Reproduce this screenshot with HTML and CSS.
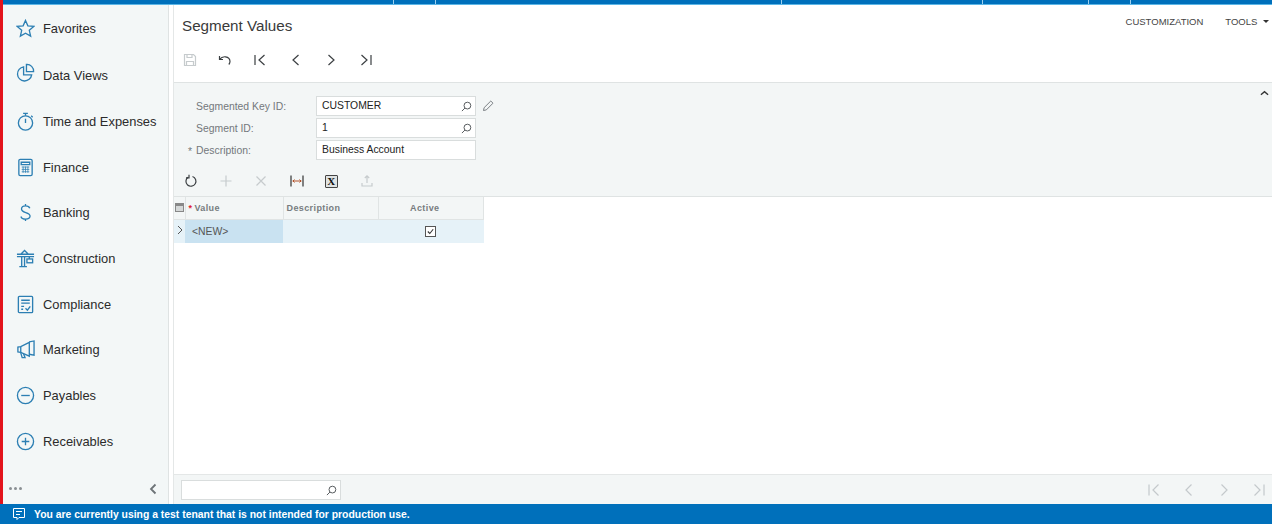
FILE: index.html
```html
<!DOCTYPE html>
<html lang="en">
<head>
    <meta charset="UTF-8">
    <title>Segment Values</title>
    <link rel="stylesheet" href="styles.css">
</head>
<body>
    <div class="app">
        <div class="topbar">
            <span class="tab tab-1"></span>
            <span class="tab tab-2"></span>
            <span class="tab tab-3"></span>
            <span class="tab tab-4"></span>
            <span class="tab tab-5"></span>
            <span class="tab tab-6"></span>
        </div>
        <div class="workspace">
            <aside class="sidebar">
                <nav class="nav">
                    <a class="nav-item nav-first">
                        <svg class="nav-icon" viewBox="0 0 20 20"><path d="M10 1.500l2.500 5.700 6.200.6-4.700 4.100 1.400 6.100L10 14.900 4.600 18l1.400-6.100L1.300 7.800l6.200-.6z"/></svg>
                        Favorites
                    </a>
                    <a class="nav-item">
                        <svg class="nav-icon icon-high" viewBox="0 0 20 20"><path d="M8 4a7.500 7.500 0 1 0 8.500 8.500H8z"/><path d="M11 1.500a7 7 0 0 1 7.500 7.500H11z"/></svg>
                        Data Views
                    </a>
                    <a class="nav-item">
                        <svg class="nav-icon" viewBox="0 0 20 20"><circle cx="10" cy="11.500" r="7.500"/><path d="M7.500 1.500h5M10 1.500v2.500M10 11.500V7M16 4l1.500 1.500"/></svg>
                        Time and Expenses
                    </a>
                    <a class="nav-item">
                        <svg class="nav-icon" viewBox="0 0 20 20"><rect x="3" y="1.500" width="14" height="17" rx="1.500"/><path d="M5.500 4.500h9v2.500h-9z"/><path class="thin" d="M6 9.500h8M6 12h8M6 14.500h8M7.500 9v6.500M10 9v6.500M12.500 9v6.500"/></svg>
                        Finance
                    </a>
                    <a class="nav-item">
                        <svg class="nav-icon" viewBox="0 0 20 20"><path d="M14.500 5.500C14 3.800 12.200 3 10 3 7.500 3 5.800 4.300 5.800 6.300c0 4.700 9 2.800 9 7.500 0 2-1.900 3.200-4.800 3.200-2.500 0-4.300-1-4.800-2.800M10 1v2M10 17v2"/></svg>
                        Banking
                    </a>
                    <a class="nav-item">
                        <svg class="nav-icon" viewBox="0 0 20 20"><path d="M1 5.500h18M1 8h18M5 5.500L9 1.500l4 4M6 8v10.500M9 8v10.500M3.500 18.500h8M14 8v2.500"/><rect x="11.500" y="10.500" width="6" height="4"/></svg>
                        Construction
                    </a>
                    <a class="nav-item">
                        <svg class="nav-icon" viewBox="0 0 20 20"><rect x="2.500" y="1.500" width="15" height="17" rx="1"/><path d="M5.500 5.500h9M5.500 8.500h9M5.500 12h3M5.500 15h2M10 14l2 2 3-4"/></svg>
                        Compliance
                    </a>
                    <a class="nav-item">
                        <svg class="nav-icon" viewBox="0 0 20 20"><path d="M2 7.500v5l3 .5 9 4V2.500L5 7z"/><path d="M5 7v6M5 13.500l1.500 5h3L8 14.800M14 2l5-1v15l-5-1"/></svg>
                        Marketing
                    </a>
                    <a class="nav-item">
                        <svg class="nav-icon" viewBox="0 0 20 20"><circle cx="10" cy="10" r="8.500"/><path d="M5.500 10h9"/></svg>
                        Payables
                    </a>
                    <a class="nav-item">
                        <svg class="nav-icon" viewBox="0 0 20 20"><circle cx="10" cy="10" r="8.500"/><path d="M6 10h8M10 6v8"/></svg>
                        Receivables
                    </a>
                </nav>
                <div class="sidebar-foot">
                    <span class="dots">
                        <i></i><i></i><i></i>
                    </span>
                    <svg class="collapse" viewBox="0 0 10 12"><path d="M7.500 1.500L3 6l4.500 4.500"/></svg>
                </div>
            </aside>

            <main class="main">
                <header class="page-head">
                    <h1>Segment Values</h1>
                    <div class="head-links">
                        <a>CUSTOMIZATION</a>
                        <a>TOOLS <span class="caret"></span></a>
                    </div>
                </header>

                <div class="toolbar">
                    <button class="tool off"><svg viewBox="0 0 14 14"><path d="M1.500 1.500h9l2 2v9h-11z"/><path d="M4 1.500v3h5v-3M3.500 12.500v-4h7v4"/></svg></button>
                    <button class="tool"><svg viewBox="0 0 14 14"><path d="M1.500 3v3.500H5M1.500 6.500C3 4.500 5 3.500 7.500 3.800c2.700.4 4.500 2.400 4.500 4.700 0 1.200-.5 2.200-1.200 3"/></svg></button>
                    <button class="tool"><svg viewBox="0 0 14 14"><path d="M2 2v10M11.500 2L6 7l5.500 5"/></svg></button>
                    <button class="tool"><svg viewBox="0 0 14 14"><path d="M9.500 2L4 7l5.500 5"/></svg></button>
                    <button class="tool"><svg viewBox="0 0 14 14"><path d="M4.500 2L10 7l-5.500 5"/></svg></button>
                    <button class="tool"><svg viewBox="0 0 14 14"><path d="M12 2v10M2.500 2L8 7l-5.500 5"/></svg></button>
                </div>

                <section class="panel">
                    <svg class="panel-toggle" viewBox="0 0 10 6"><path d="M1 5l4-3.500L9 5"/></svg>
                    <div class="form">
                        <label>Segmented Key ID:</label>
                        <div class="field">
                            CUSTOMER
                            <svg class="lens" viewBox="0 0 12 12"><circle cx="7" cy="5" r="3.700"/><path d="M4.300 7.700L1 11"/></svg>
                        </div>
                        <svg class="pencil" viewBox="0 0 12 12"><path d="M1.500 10.500l.6-2.800L8.800 1l2.200 2.200-6.700 6.700z"/></svg>

                        <label>Segment ID:</label>
                        <div class="field">
                            1
                            <svg class="lens" viewBox="0 0 12 12"><circle cx="7" cy="5" r="3.700"/><path d="M4.300 7.700L1 11"/></svg>
                        </div>
                        <span></span>

                        <label class="required">Description:</label>
                        <div class="field">Business Account</div>
                        <span></span>
                    </div>

                    <div class="grid-tools">
                        <button class="tool"><svg viewBox="0 0 14 14"><path d="M8.500 2.500A5 5 0 1 1 4 3.200"/><path d="M5 .8v3H2"/></svg></button>
                        <button class="tool off"><svg viewBox="0 0 14 14"><path d="M7 1.500v11M1.500 7h11"/></svg></button>
                        <button class="tool off"><svg viewBox="0 0 14 14"><path d="M2.500 2.500l9 9M11.500 2.500l-9 9"/></svg></button>
                        <button class="tool fit"><svg viewBox="0 0 14 14"><path class="dark" d="M1 1.500v11M13 1.500v11"/><path class="accent" d="M2.500 7h9M4.500 5.500L3 7l1.500 1.500M9.500 5.500L11 7 9.500 8.500"/></svg></button>
                        <button class="tool excel"><span>X</span></button>
                        <button class="tool off"><svg viewBox="0 0 14 14"><path d="M7 9V2M4.800 4L7 1.800 9.200 4M2 9v3h10V9"/></svg></button>
                    </div>
                </section>

                <section class="grid-area">
                    <table class="grid">
                        <thead>
                            <tr>
                                <th class="col-mark"><span class="mark-icon"></span></th>
                                <th class="col-value"><span class="star">*</span>Value</th>
                                <th class="col-desc">Description</th>
                                <th class="col-active">Active</th>
                            </tr>
                        </thead>
                        <tbody>
                            <tr>
                                <td class="col-mark"><svg class="row-arrow" viewBox="0 0 6 10"><path d="M1 1l4 4-4 4"/></svg></td>
                                <td class="col-value cell-current">&lt;NEW&gt;</td>
                                <td class="col-desc"></td>
                                <td class="col-active"><span class="check"><svg viewBox="0 0 10 10"><path d="M2 5l2.200 2.200L8 2.500"/></svg></span></td>
                            </tr>
                        </tbody>
                    </table>
                </section>

                <footer class="pager">
                    <div class="field pager-search">
                        <svg class="lens" viewBox="0 0 12 12"><circle cx="7" cy="5" r="3.700"/><path d="M4.300 7.700L1 11"/></svg>
                    </div>
                    <div class="pager-btns">
                        <svg viewBox="0 0 14 14"><path d="M2 1.500v11M11.500 1.500L6 7l5.500 5.500"/></svg>
                        <svg viewBox="0 0 14 14"><path d="M9.500 1.500L4 7l5.500 5.500"/></svg>
                        <svg viewBox="0 0 14 14"><path d="M4.500 1.500L10 7l-5.500 5.500"/></svg>
                        <svg viewBox="0 0 14 14"><path d="M12 1.500v11M2.500 1.500L8 7l-5.500 5.500"/></svg>
                    </div>
                </footer>
            </main>
        </div>
    </div>
    <div class="status">
        <svg viewBox="0 0 14 14"><path d="M1.500 1.500h11v9H7L5 12.500v-2H1.500z"/><path d="M4 4.500h6M4 7.500h4"/></svg>
        You are currently using a test tenant that is not intended for production use.
    </div>
</body>
</html>
```

FILE: styles.css
```css
* {
    box-sizing: border-box;
}
html, body {
    margin: 0;
    height: 100%;
    overflow: hidden;
}
body {
    font-family: "Liberation Sans", Arial, sans-serif;
    font-size: 12px;
    color: #333;
    background-color: white;
    display: flex;
    flex-direction: column;
}
svg {
    display: block;
    fill: none;
    stroke: currentColor;
}
button {
    border: none;
    background: none;
    padding: 0;
    font: inherit;
}

.app {
    height: 504px;
    display: flex;
    flex-direction: column;
    border-left: 3px solid #e3141c;
}
.topbar {
    position: relative;
    height: 5px;
    flex: none;
    background-color: #0070bb;
    border-bottom: 1px solid #5cb6e6;
}
.tab {
    position: absolute;
    top: 0;
    width: 1px;
    height: 4px;
    background-color: #9fd0ee;
}
.tab-1 { left: 390px; }
.tab-2 { left: 432px; }
.tab-3 { left: 778px; }
.tab-4 { left: 979px; }
.tab-5 { left: 1085px; }
.tab-6 { left: 1127px; }

.workspace {
    flex: 1;
    min-height: 0;
    display: flex;
}

/* left menu */
.sidebar {
    width: 166px;
    flex: none;
    display: flex;
    flex-direction: column;
    background-color: #f3f7f7;
    border-right: 1px solid #dfe3e3;
}
.nav {
    flex: 1;
    padding-top: 1px;
}
.nav-item {
    height: 45.7px;
    display: flex;
    align-items: center;
    gap: 8px;
    padding-left: 13px;
    font-size: 12.9px;
    color: #2b2b2b;
    white-space: nowrap;
}
.nav-first {
    height: 47px;
    padding-bottom: 3px;
}
.nav-icon {
    width: 19px;
    height: 19px;
    flex: none;
    stroke: #2c7fb3;
    stroke-width: 1.4;
}
.nav-icon .thin {
    stroke-width: .8;
}
.icon-high {
    margin-top: -6px;
}
.sidebar-foot {
    height: 31px;
    flex: none;
    display: flex;
    align-items: center;
    justify-content: space-between;
    padding: 0 10px 0 6px;
}
.dots {
    display: flex;
    gap: 2px;
}
.dots i {
    width: 3px;
    height: 3px;
    border-radius: 50%;
    background-color: #8a8f93;
}
.collapse {
    width: 10px;
    height: 12px;
    stroke: #6d7377;
    stroke-width: 1.8;
}

/* page */
.main {
    flex: 1;
    min-width: 0;
    display: flex;
    flex-direction: column;
    margin-left: 4px;
    border-left: 1px solid #e4e7e7;
}
.page-head {
    height: 34px;
    flex: none;
    display: flex;
    justify-content: space-between;
    padding: 12px 3px 0 8px;
}
.page-head h1 {
    margin: 0;
    font-size: 15.2px;
    line-height: 18px;
    font-weight: normal;
    color: #3a3a3a;
}
.head-links {
    display: flex;
    gap: 22px;
    font-size: 9.5px;
    line-height: 11px;
    margin-top: -1px;
    color: #444;
}
.caret {
    display: inline-block;
    margin-left: 3px;
    vertical-align: 2px;
    border: 3px solid transparent;
    border-top-color: #333;
    border-bottom: none;
}
.toolbar {
    height: 43px;
    flex: none;
    display: flex;
    align-items: flex-start;
    padding: 14px 0 0 9px;
    gap: 21.2px;
}
.tool {
    width: 14px;
    height: 14px;
    color: #3b3f42;
    flex: none;
}
.tool svg {
    width: 14px;
    height: 14px;
    stroke-width: 1.2;
}
.tool.off {
    color: #c6cbcd;
}

.panel {
    position: relative;
    height: 115px;
    flex: none;
    background-color: #f3f6f6;
    border-top: 1px solid #dfe3e3;
    border-bottom: 1px solid #dfe3e3;
    padding-top: 13px;
}
.panel-toggle {
    position: absolute;
    top: 7px;
    right: 3px;
    width: 9px;
    height: 6px;
    stroke: #333;
    stroke-width: 1.5;
}
.form {
    display: grid;
    grid-template-columns: 142px 160px 20px;
    grid-auto-rows: 20px;
    row-gap: 2px;
    align-items: center;
}
.form label {
    padding-left: 22px;
    font-size: 10.4px;
    color: #73787c;
}
.form label.required {
    position: relative;
}
.form label.required::before {
    content: "*";
    position: absolute;
    left: 14px;
    top: 1px;
}
.field {
    position: relative;
    height: 20px;
    line-height: 18px;
    padding-left: 5px;
    background-color: white;
    border: 1px solid #d9dddd;
    font-size: 10.4px;
    color: #222;
}
.lens {
    position: absolute;
    top: 4px;
    right: 3px;
    width: 11px;
    height: 11px;
    stroke: #4a4f52;
    stroke-width: 1;
}
.pencil {
    width: 12px;
    height: 12px;
    margin-left: 6px;
    stroke: #6d7377;
    stroke-width: .9;
}
.grid-tools {
    display: flex;
    align-items: center;
    gap: 21.2px;
    padding: 14px 0 0 10px;
}
.tool.fit .dark {
    stroke: #333;
}
.tool.fit .accent {
    stroke: #b3532a;
    stroke-width: 1;
}
.excel span {
    display: block;
    width: 13px;
    height: 13px;
    margin-top: 1px;
    border: 1px solid #444;
    border-radius: 1px;
    background-color: #dfe3e3;
    font-family: "Liberation Serif", serif;
    font-weight: bold;
    font-size: 11px;
    line-height: 11px;
    text-align: center;
    color: #111;
}

.grid-area {
    flex: 1;
    min-height: 0;
    background-color: white;
}
.grid {
    border-collapse: collapse;
    table-layout: fixed;
    width: 310px;
}
.grid th {
    height: 22px;
    padding: 0 3px;
    background-color: #f3f6f6;
    border-right: 1px solid #e0e4e4;
    border-bottom: 1px solid #e0e4e4;
    font-size: 9px;
    font-weight: bold;
    letter-spacing: .4px;
    color: #777c80;
    text-align: left;
}
.grid td {
    height: 24px;
    padding: 0 7px;
    background-color: #e6f2f8;
    font-size: 10.4px;
    color: #555;
}
.grid .col-mark {
    width: 11px;
    padding: 0 0 0 1px;
}
.grid .col-value {
    width: 98px;
}
.grid td.cell-current {
    background-color: #c9e2f1;
}
.grid .col-desc {
    width: 95px;
}
.grid th.col-active {
    padding-right: 15px;
    text-align: center;
}
.star {
    color: #d23;
    margin-right: 2px;
}
.mark-icon {
    display: block;
    width: 9px;
    height: 9px;
    background-color: #d5d8d8;
    border: 1px solid #888;
    border-top-width: 3px;
}
.row-arrow {
    width: 6px;
    height: 10px;
    margin: -3px 0 0 2px;
    stroke: #555;
    stroke-width: 1;
}
.check {
    display: block;
    width: 11px;
    height: 11px;
    margin-left: 40px;
    background-color: white;
    border: 1px solid #555;
    color: #333;
}
.check svg {
    width: 9px;
    height: 9px;
    stroke-width: 1.2;
}

.pager {
    height: 30px;
    flex: none;
    display: flex;
    align-items: center;
    justify-content: space-between;
    padding: 0 6px 0 7px;
    background-color: #f3f6f6;
    border-top: 1px solid #e4e7e7;
}
.pager-search {
    width: 160px;
}
.pager-btns {
    display: flex;
    gap: 21px;
    color: #c4c9cc;
}
.pager-btns svg {
    width: 14px;
    height: 14px;
    stroke-width: 1.2;
}

.status {
    height: 20px;
    flex: none;
    display: flex;
    align-items: center;
    gap: 8px;
    padding-left: 12px;
    background-color: #0070bb;
    color: white;
    font-size: 10.4px;
    font-weight: bold;
}
.status svg {
    width: 14px;
    height: 14px;
    stroke-width: 1;
}
```
